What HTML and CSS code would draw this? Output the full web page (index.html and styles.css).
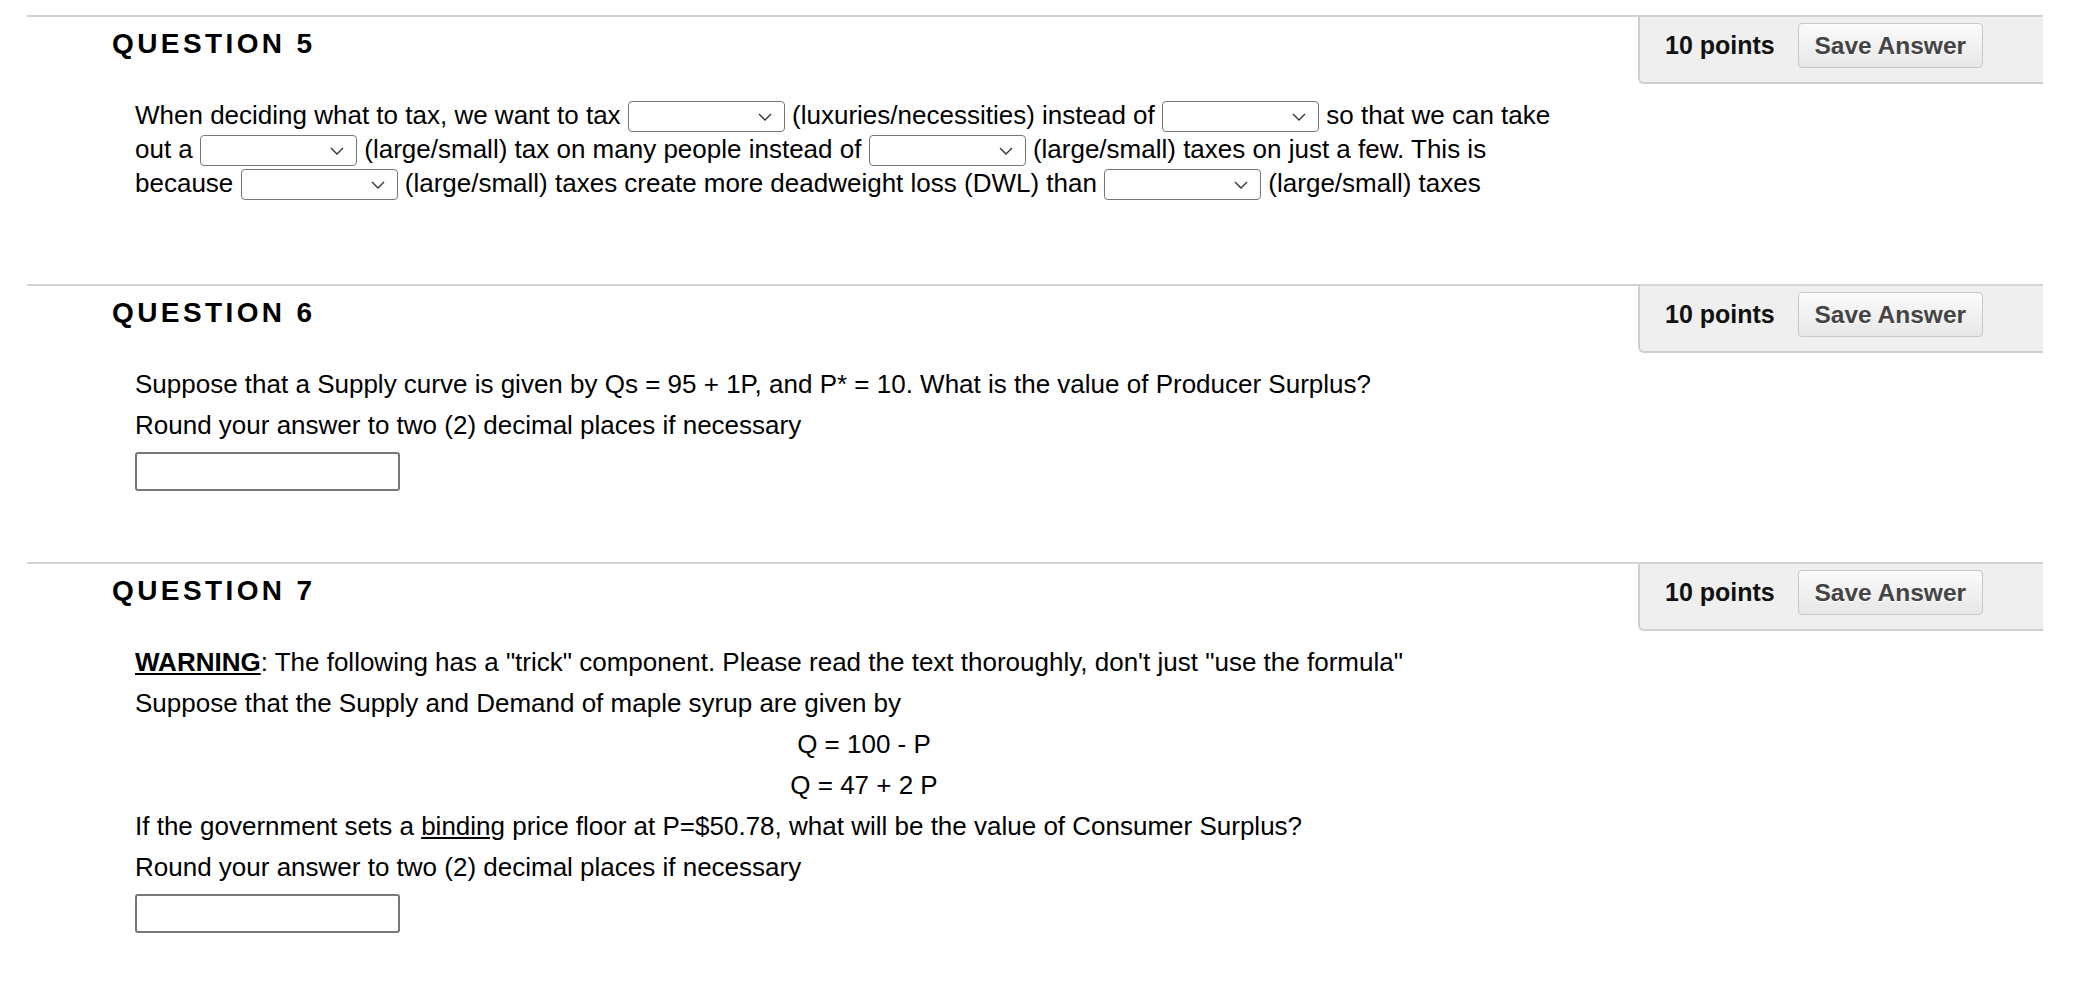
FILE: index.html
```html
<!DOCTYPE html>
<html lang="en">
<head>
<meta charset="utf-8">
<title>Questions</title>
<link rel="stylesheet" href="styles.css">
</head>
<body>
<div class="page">

  <section class="question question--q5">
    <div class="q-head">
      <h3 class="q-title">QUESTION 5</h3>
      <div class="q-points"><span class="pts">10 points</span><button class="save" type="button">Save Answer</button></div>
    </div>
    <div class="q-body">
      <p class="q-text q-text--flow">When deciding what to tax, we want to tax <span class="sel"><svg class="chev" viewBox="0 0 14 8" width="14" height="8"><path d="M1 1 7 7 13 1"/></svg></span> (luxuries/necessities) instead of <span class="sel"><svg class="chev" viewBox="0 0 14 8" width="14" height="8"><path d="M1 1 7 7 13 1"/></svg></span> so that we can take out a <span class="sel"><svg class="chev" viewBox="0 0 14 8" width="14" height="8"><path d="M1 1 7 7 13 1"/></svg></span> (large/small) tax on many people instead of <span class="sel"><svg class="chev" viewBox="0 0 14 8" width="14" height="8"><path d="M1 1 7 7 13 1"/></svg></span> (large/small) taxes on just a few. This is because <span class="sel"><svg class="chev" viewBox="0 0 14 8" width="14" height="8"><path d="M1 1 7 7 13 1"/></svg></span> (large/small) taxes create more deadweight loss (DWL) than <span class="sel"><svg class="chev" viewBox="0 0 14 8" width="14" height="8"><path d="M1 1 7 7 13 1"/></svg></span> (large/small) taxes</p>
    </div>
  </section>

  <section class="question">
    <div class="q-head">
      <h3 class="q-title">QUESTION 6</h3>
      <div class="q-points"><span class="pts">10 points</span><button class="save" type="button">Save Answer</button></div>
    </div>
    <div class="q-body">
      <p class="q-text">Suppose that a Supply curve is given by Qs = 95 + 1P, and P* = 10. What is the value of Producer Surplus?</p>
      <p class="q-text">Round your answer to two (2) decimal places if necessary</p>
      <input class="answer" type="text" aria-label="Answer">
    </div>
  </section>

  <section class="question">
    <div class="q-head">
      <h3 class="q-title">QUESTION 7</h3>
      <div class="q-points"><span class="pts">10 points</span><button class="save" type="button">Save Answer</button></div>
    </div>
    <div class="q-body">
      <p class="q-text"><strong class="warn">WARNING</strong>: The following has a "trick" component. Please read the text thoroughly, don't just "use the formula"</p>
      <p class="q-text">Suppose that the Supply and Demand of maple syrup are given by</p>
      <p class="q-text q-eq">Q = 100 - P</p>
      <p class="q-text q-eq">Q = 47 + 2 P</p>
      <p class="q-text">If the government sets a <span class="ul">binding</span> price floor at P=$50.78, what will be the value of Consumer Surplus?</p>
      <p class="q-text">Round your answer to two (2) decimal places if necessary</p>
      <input class="answer" type="text" aria-label="Answer">
    </div>
  </section>

</div>
</body>
</html>
```

FILE: styles.css
```css
* {
  box-sizing: border-box;
}

html,
body {
  margin: 0;
  padding: 0;
  background: #ffffff;
}

body {
  font-family: "Liberation Sans", Arial, Helvetica, sans-serif;
  color: #000000;
}

.page {
  margin-left: 27px;
  width: 2016px;
  padding-top: 15px;
}

.question {
  border-top: 2px solid #d2d2d2;
  padding-bottom: 71px;
}

.q-head {
  display: flex;
  justify-content: space-between;
  align-items: flex-start;
}

.q-title {
  margin: 0;
  padding: 10px 0 0 85px;
  font-size: 28px;
  line-height: 34px;
  font-weight: bold;
  letter-spacing: 3.4px;
  color: #000;
}

.q-points {
  display: flex;
  align-items: center;
  gap: 23px;
  width: 405px;
  padding: 6px 0 14px 25px;
  background: #efefef;
  border-left: 2px solid #d0d0d0;
  border-bottom: 2px solid #d0d0d0;
  border-bottom-left-radius: 6px;
}

.pts {
  font-size: 25px;
  font-weight: bold;
  color: #111;
  white-space: nowrap;
}

.save {
  flex: none;
  width: 185px;
  height: 45px;
  padding: 0;
  font-family: "Liberation Sans", Arial, Helvetica, sans-serif;
  font-size: 24.5px;
  font-weight: bold;
  color: #444;
  text-shadow: 0 1px 0 #ffffff;
  background: linear-gradient(#fbfbfb, #e7e7e7);
  border: 1px solid #c8c8c8;
  border-radius: 4px;
}

.q-body {
  width: 1558px;
  padding: 11px 0 0 108px;
}

.q-text {
  margin: 0;
  font-size: 26px;
  line-height: 41px;
}

.q-text--flow {
  margin-top: 3px;
  margin-bottom: 13px;
  line-height: 34px;
}

.q-eq {
  text-align: center;
  padding-left: 8px;
}

.warn {
  text-decoration: underline;
}

.ul {
  text-decoration: underline;
}

.sel {
  display: inline-block;
  overflow: hidden;
  width: 157px;
  height: 31px;
  vertical-align: -8px;
  border: 1px solid #767676;
  border-radius: 4px;
  background: #ffffff;
}

.chev {
  display: block;
  margin: 11px 12px 0 auto;
}

.chev path {
  fill: none;
  stroke: #333;
  stroke-width: 1.4;
}

.answer {
  display: block;
  width: 265px;
  height: 39px;
  margin-top: 6px;
  border: 2px solid #777;
  border-radius: 3px;
  background: #fff;
  font-size: 24px;
}
```
